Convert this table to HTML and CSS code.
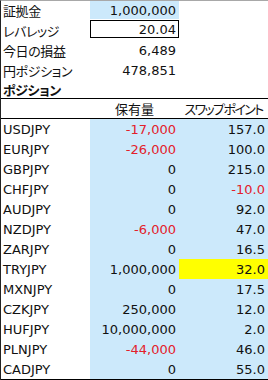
FILE: index.html
```html
<!DOCTYPE html>
<html lang="ja">
<head>
    <meta charset="UTF-8">
    <meta name="viewport" content="width=device-width, initial-scale=1.0">
    <title>ポジション</title>
    <link rel="stylesheet" href="styles.css">
</head>
<body>
    <div class="sheet">
        <div class="summary">
            <div class="label">証拠金</div>
            <div class="value input">1,000,000</div>
            <div></div>
            <div class="label">レバレッジ</div>
            <div class="value boxed">20.04</div>
            <div></div>
            <div class="label">今日の損益</div>
            <div class="value">6,489</div>
            <div></div>
            <div class="label">円ポジション</div>
            <div class="value">478,851</div>
            <div></div>
            <div class="label title">ポジション</div>
            <div></div>
            <div></div>
        </div>

        <table class="positions">
            <thead>
                <tr>
                    <th></th>
                    <th>保有量</th>
                    <th class="swap">スワップポイント</th>
                </tr>
            </thead>
            <tbody>
                <tr><td>USDJPY</td><td class="num neg">-17,000</td><td class="num">157.0</td></tr>
                <tr><td>EURJPY</td><td class="num neg">-26,000</td><td class="num">100.0</td></tr>
                <tr><td>GBPJPY</td><td class="num">0</td><td class="num">215.0</td></tr>
                <tr><td>CHFJPY</td><td class="num">0</td><td class="num neg">-10.0</td></tr>
                <tr><td>AUDJPY</td><td class="num">0</td><td class="num">92.0</td></tr>
                <tr><td>NZDJPY</td><td class="num neg">-6,000</td><td class="num">47.0</td></tr>
                <tr><td>ZARJPY</td><td class="num">0</td><td class="num">16.5</td></tr>
                <tr><td>TRYJPY</td><td class="num">1,000,000</td><td class="num mark">32.0</td></tr>
                <tr><td>MXNJPY</td><td class="num">0</td><td class="num">17.5</td></tr>
                <tr><td>CZKJPY</td><td class="num">250,000</td><td class="num">12.0</td></tr>
                <tr><td>HUFJPY</td><td class="num">10,000,000</td><td class="num">2.0</td></tr>
                <tr><td>PLNJPY</td><td class="num neg">-44,000</td><td class="num">46.0</td></tr>
                <tr><td>CADJPY</td><td class="num">0</td><td class="num">55.0</td></tr>
            </tbody>
        </table>
    </div>
</body>
</html>
```

FILE: styles.css
```css
body {
    margin: 0;
    padding: 0;
    background: #fff;
    color: #111;
    font-family: "DejaVu Sans", "Noto Sans CJK JP", sans-serif;
    font-size: 13px;
    font-feature-settings: "palt";
}

.sheet {
    width: 268px;
    height: 380px;
    box-sizing: border-box;
    border-top: 1px solid #a8a8a8;
    border-left: 1px solid #222;
}

.summary {
    display: grid;
    grid-template-columns: 89px 89px 89px;
    grid-template-rows: 19px 20px 20px 20px 18px;
}

.summary > div {
    display: flex;
    align-items: center;
    white-space: nowrap;
}

.label {
    padding-left: 2px;
    letter-spacing: -0.4px;
}

.title {
    font-weight: bold;
}

.value {
    justify-content: flex-end;
    padding-right: 3px;
}

.input {
    background: #cce9fb;
    height: 18px;
    align-self: start;
}

.boxed {
    box-sizing: border-box;
    height: 18px;
    align-self: start;
    border: 1px solid #000;
    padding-right: 2px;
}

.positions {
    width: 267px;
    border-collapse: collapse;
    table-layout: fixed;
    border-top: 1px solid #000;
    border-bottom: 1px solid #000;
}

.positions th,
.positions td {
    padding: 0;
    white-space: nowrap;
}

.positions th {
    height: 19px;
    font-weight: normal;
    text-align: center;
    border-bottom: 1px solid #000;
}

.positions .swap {
    letter-spacing: -1.6px;
}

.positions th:nth-child(1),
.positions td:nth-child(1) {
    width: 89px;
}

.positions th:nth-child(2),
.positions td:nth-child(2) {
    width: 89px;
}

.positions td {
    height: 20px;
}

.positions td:first-child {
    padding-left: 2px;
}

.num {
    background: #cce9fb;
    text-align: right;
    padding-right: 3px !important;
}

.neg {
    color: #e3202a;
}

.mark {
    background: #ffff00;
}
```
